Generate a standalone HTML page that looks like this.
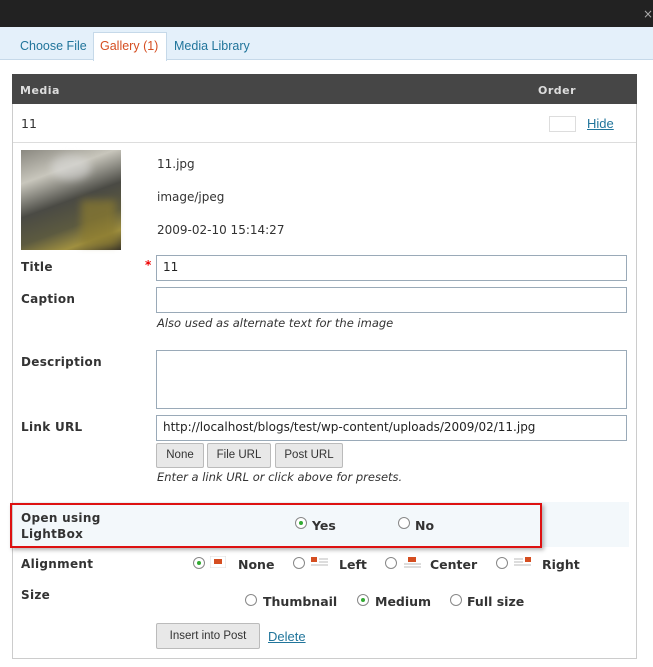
<!DOCTYPE html>
<html><head><meta charset="utf-8"><style>
*{margin:0;padding:0;box-sizing:border-box}
body{width:653px;height:667px;background:#fff;position:relative;overflow:hidden;font-family:"DejaVu Sans","Liberation Sans",sans-serif;font-size:12px;color:#333}
.a{position:absolute;white-space:nowrap}
.lbl{font-weight:bold;color:#333;font-size:12px;letter-spacing:.3px}
.inp{position:absolute;border:1px solid #9aaab8;background:#fff;font-size:12px;padding:4px 6px;color:#222}
.btn{position:absolute;border:1px solid #bbb;background:#e8e8e8;border-radius:2px;font-size:11.5px;color:#333;text-align:center;line-height:22px;font-family:"Liberation Sans",sans-serif}
.lnk{color:#21759b;text-decoration:underline;font-family:"Liberation Sans",sans-serif;font-size:13px}
.r{position:absolute;width:12px;height:12px;border:1px solid #888;border-radius:50%;background:#fff}
.r.on::after{content:"";position:absolute;left:3px;top:3px;width:4px;height:4px;border-radius:50%;background:#3a3}
.it{font-style:italic;font-size:11.5px;color:#333}
.rt{font-weight:bold;font-size:12.5px;color:#333}
</style></head><body>
<div class="a" style="left:0;top:0;width:653px;height:27px;background:#222"></div>
<div class="a" style="left:643px;top:7px;color:#aaa;font-size:12px">×</div>
<div class="a" style="left:0;top:27px;width:653px;height:33px;background:#e4f0fa;border-bottom:1px solid #c6d9e9"></div>
<div class="a" style="left:93px;top:32px;width:74px;height:29px;background:#fff;border:1px solid #c6d9e9;border-bottom:none"></div>
<div class="a" style="left:20px;top:39px;color:#21759b;font-family:'Liberation Sans',sans-serif;font-size:12.5px">Choose File</div>
<div class="a" style="left:100px;top:39px;color:#d54e21;font-family:'Liberation Sans',sans-serif;font-size:12.5px">Gallery (1)</div>
<div class="a" style="left:174px;top:39px;color:#21759b;font-family:'Liberation Sans',sans-serif;font-size:12.5px">Media Library</div>

<div class="a" style="left:12px;top:74px;width:625px;height:585px;border:1px solid #ccc"></div>
<div class="a" style="left:12px;top:74px;width:625px;height:30px;background:#464646"></div>
<div class="a" style="left:20px;top:84px;color:#ddd;font-weight:bold;font-size:11px;letter-spacing:.5px">Media</div>
<div class="a" style="left:538px;top:84px;color:#ddd;font-weight:bold;font-size:11px;letter-spacing:.5px">Order</div>
<div class="a" style="left:13px;top:142px;width:623px;height:1px;background:#ddd"></div>
<div class="a" style="left:21px;top:116px;font-size:12.5px">11</div>
<div class="a" style="left:549px;top:116px;width:27px;height:16px;border:1px solid #ddd"></div>
<div class="a lnk" style="left:587px;top:116px">Hide</div>

<div class="a" style="left:21px;top:150px;width:100px;height:100px;background:linear-gradient(160deg,#8a8880 0%,#c8c6bc 25%,#4a4a44 50%,#5c5a40 70%,#a09040 85%,#3a3528 100%)"><div style="position:absolute;left:30px;top:5px;width:40px;height:25px;background:#ddd;opacity:.5;border-radius:50%;filter:blur(4px)"></div><div style="position:absolute;left:60px;top:50px;width:35px;height:45px;background:#8a7a30;opacity:.7;filter:blur(4px)"></div></div>
<div class="a" style="left:157px;top:157px">11.jpg</div>
<div class="a" style="left:157px;top:190px">image/jpeg</div>
<div class="a" style="left:157px;top:223px">2009-02-10 15:14:27</div>

<div class="a lbl" style="left:21px;top:260px">Title</div>
<div class="a" style="left:145px;top:258px;color:#e00;font-weight:bold">*</div>
<div class="inp" style="left:156px;top:255px;width:471px;height:26px">11</div>
<div class="a lbl" style="left:21px;top:292px">Caption</div>
<div class="inp" style="left:156px;top:287px;width:471px;height:26px"></div>
<div class="a it" style="left:157px;top:316px">Also used as alternate text for the image</div>
<div class="a lbl" style="left:21px;top:355px">Description</div>
<div class="inp" style="left:156px;top:350px;width:471px;height:59px"></div>
<div class="a lbl" style="left:21px;top:420px">Link URL</div>
<div class="inp" style="left:156px;top:415px;width:471px;height:26px">http://localhost/blogs/test/wp-content/uploads/2009/02/11.jpg</div>
<div class="btn" style="left:156px;top:443px;width:48px;height:25px">None</div>
<div class="btn" style="left:207px;top:443px;width:64px;height:25px">File URL</div>
<div class="btn" style="left:275px;top:443px;width:68px;height:25px">Post URL</div>
<div class="a it" style="left:157px;top:470px">Enter a link URL or click above for presets.</div>

<div class="a" style="left:13px;top:502px;width:616px;height:45px;background:#f3f8fb"></div>
<div class="a" style="left:10px;top:503px;width:532px;height:45px;border:2px solid #d11;box-shadow:2px 2px 4px rgba(0,0,0,.3)"></div>
<div class="a lbl" style="left:21px;top:510px;line-height:16px">Open using<br>LightBox</div>
<div class="r on" style="left:295px;top:517px"></div><div class="a rt" style="left:312px;top:518px">Yes</div>
<div class="r" style="left:398px;top:517px"></div><div class="a rt" style="left:415px;top:518px">No</div>

<div class="a lbl" style="left:21px;top:557px">Alignment</div>
<div class="r on" style="left:193px;top:557px"></div>
<svg class="a" style="left:210px;top:556px" width="16" height="12"><rect x="0" y="0" width="16" height="12" fill="#fff" stroke="#ddd"/><rect x="4" y="3" width="8" height="5" fill="#d54e21"/></svg>
<div class="a rt" style="left:238px;top:557px">None</div>
<div class="r" style="left:293px;top:557px"></div>
<svg class="a" style="left:310px;top:556px" width="18" height="12"><rect x="1" y="1" width="6" height="5" fill="#d54e21"/><g stroke="#bbb"><line x1="9" y1="3" x2="18" y2="3"/><line x1="9" y1="6" x2="18" y2="6"/><line x1="1" y1="9" x2="18" y2="9"/></g></svg>
<div class="a rt" style="left:339px;top:557px">Left</div>
<div class="r" style="left:385px;top:557px"></div>
<svg class="a" style="left:403px;top:556px" width="18" height="12"><rect x="5" y="1" width="8" height="5" fill="#d54e21"/><g stroke="#bbb"><line x1="1" y1="8" x2="18" y2="8"/><line x1="1" y1="11" x2="18" y2="11"/></g></svg>
<div class="a rt" style="left:430px;top:557px">Center</div>
<div class="r" style="left:496px;top:557px"></div>
<svg class="a" style="left:514px;top:556px" width="18" height="12"><rect x="11" y="1" width="6" height="5" fill="#d54e21"/><g stroke="#bbb"><line x1="0" y1="3" x2="9" y2="3"/><line x1="0" y1="6" x2="9" y2="6"/><line x1="0" y1="9" x2="17" y2="9"/></g></svg>
<div class="a rt" style="left:542px;top:557px">Right</div>

<div class="a lbl" style="left:21px;top:588px">Size</div>
<div class="r" style="left:245px;top:594px"></div><div class="a rt" style="left:263px;top:594px">Thumbnail</div>
<div class="r on" style="left:357px;top:594px"></div><div class="a rt" style="left:375px;top:594px">Medium</div>
<div class="r" style="left:450px;top:594px"></div><div class="a rt" style="left:467px;top:594px">Full size</div>

<div class="btn" style="left:156px;top:623px;width:104px;height:26px;line-height:24px">Insert into Post</div>
<div class="a lnk" style="left:268px;top:629px">Delete</div>
</body></html>
